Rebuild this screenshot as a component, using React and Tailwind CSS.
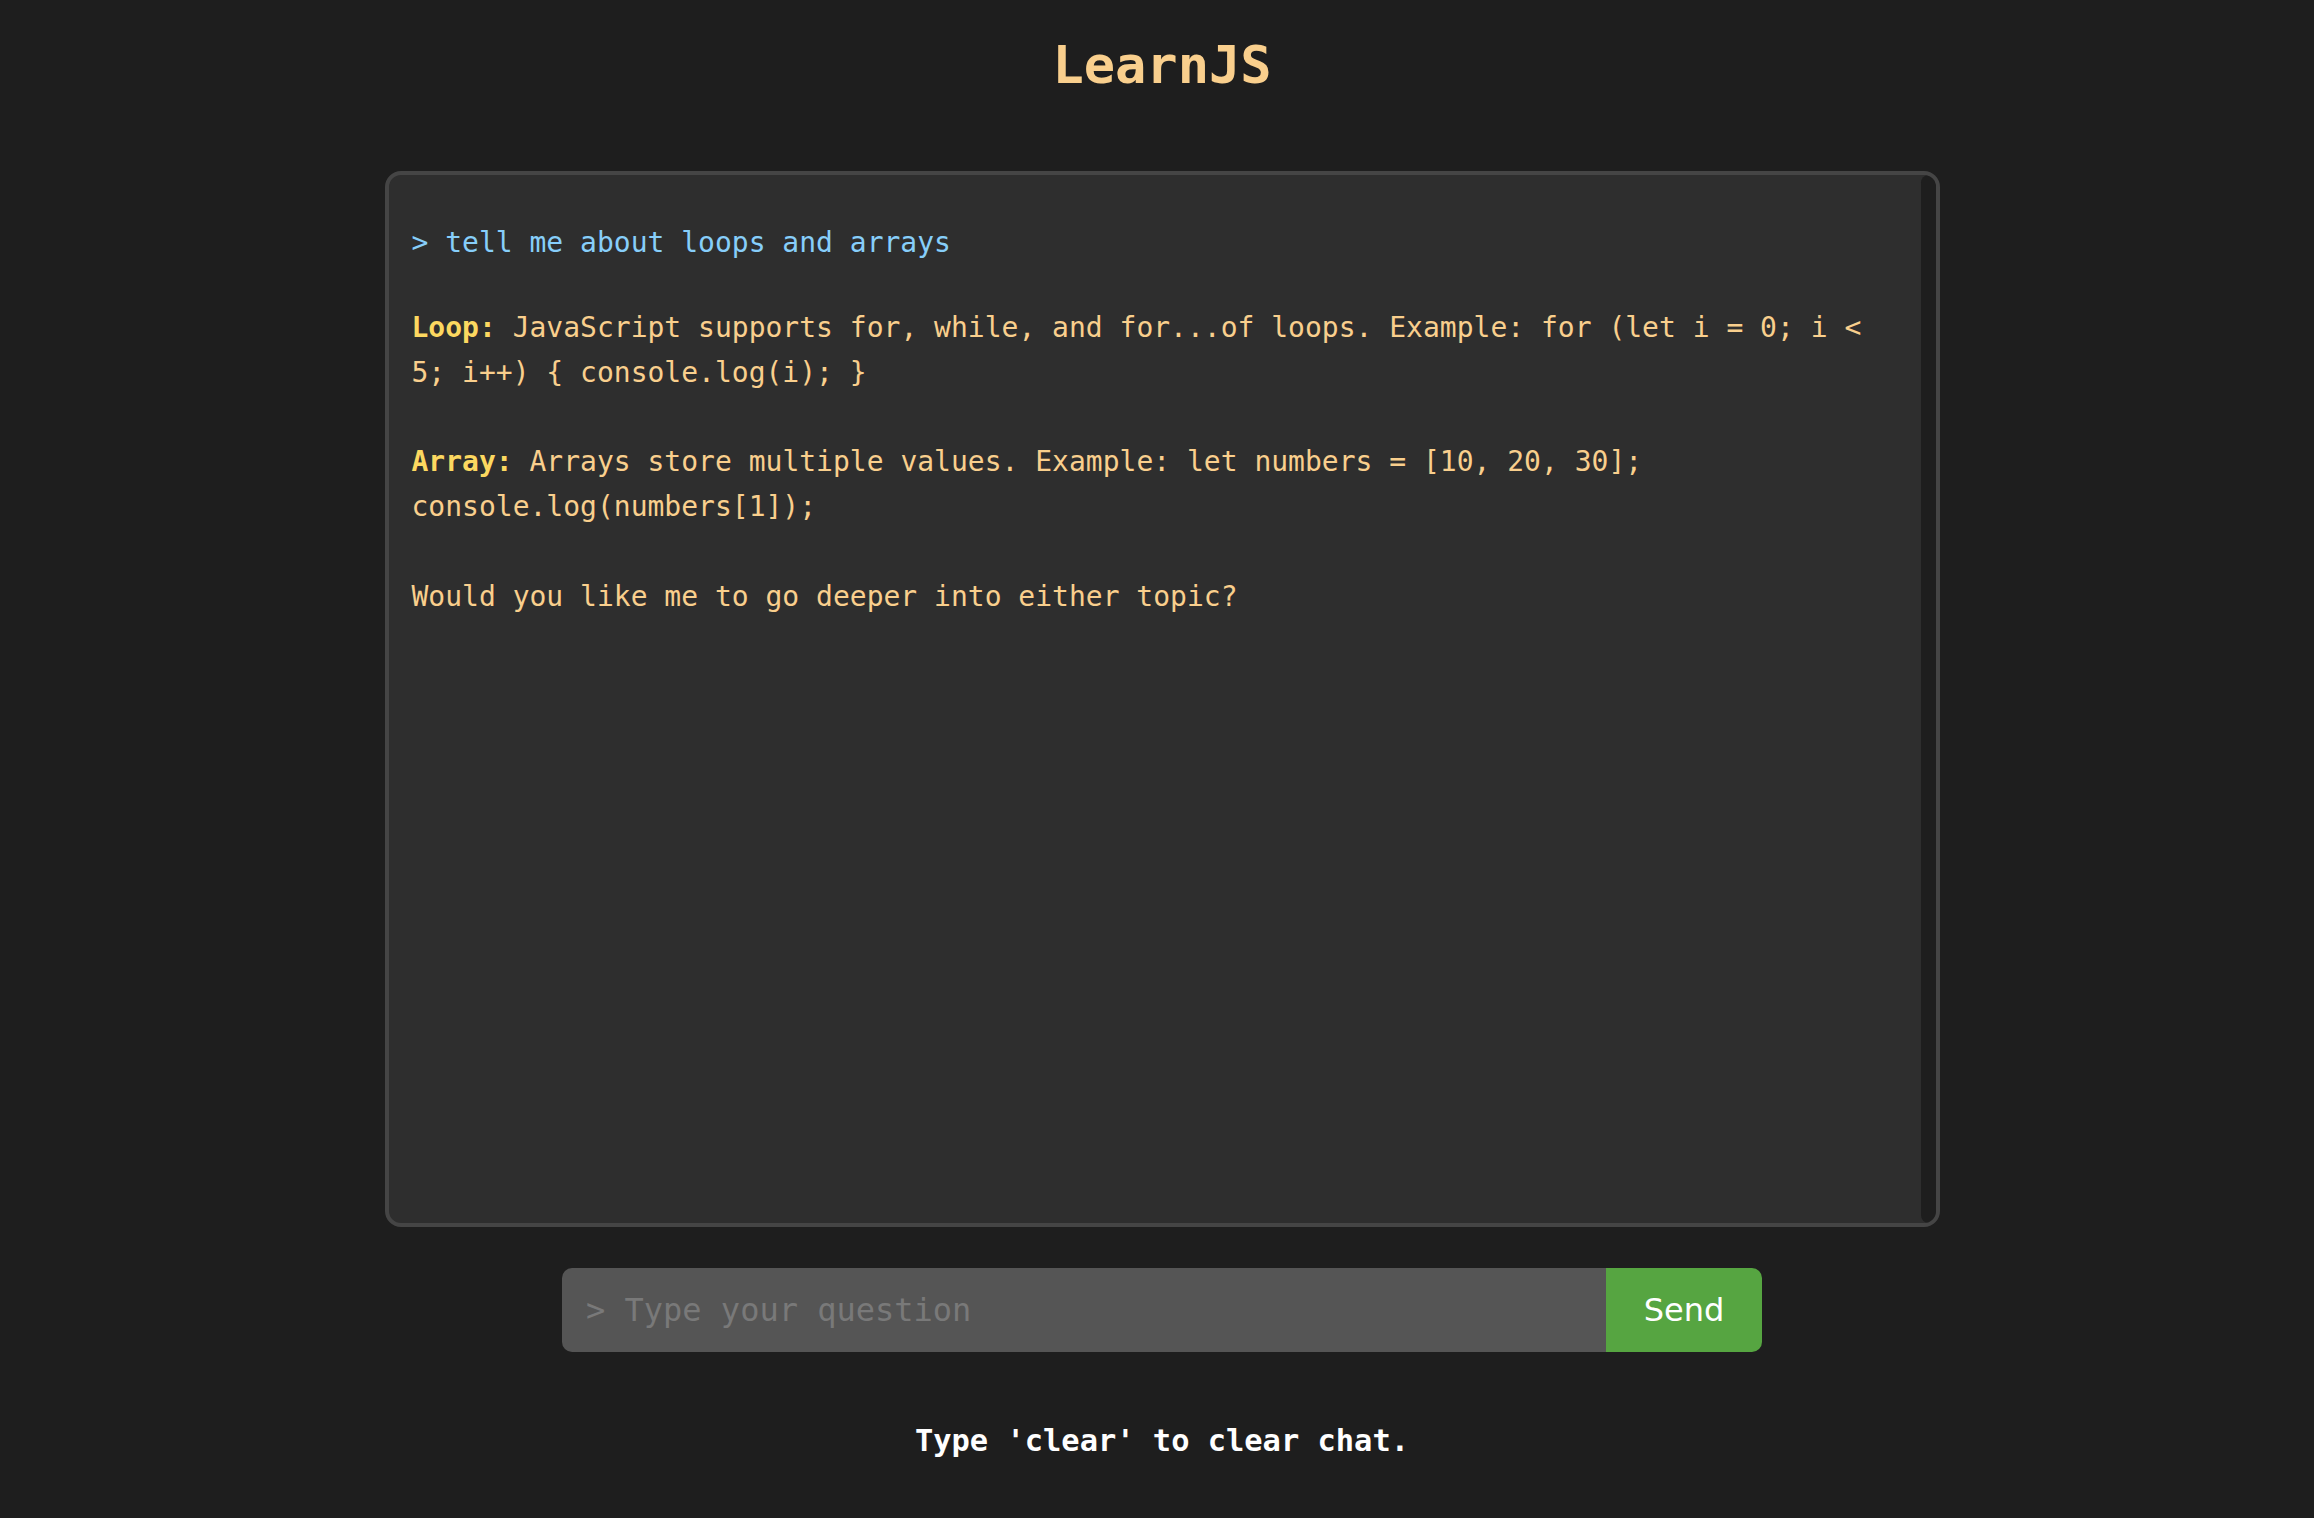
import React from "react";

export default function App() {
  const mono = "font-['DejaVu_Sans_Mono',monospace]";
  return (
    <div className={`min-h-screen w-full bg-[#1e1e1e] flex flex-col items-center pl-[10px] ${mono}`}>
      <h1 className="pt-[35px] text-[52px] leading-[60px] font-bold text-[#f9cf8d]">LearnJS</h1>

      <div className="mt-[76px] w-[1555px] h-[1056px] border-4 border-[#454545] rounded-[16px] bg-[#2e2e2e] flex overflow-hidden">
        <div className="flex-1 pl-[23px] pr-[21px] pt-[46px] text-[28px] leading-[44.8px]">
          <div className="text-[#87cefa] mb-[40px]">&gt; tell me about loops and arrays</div>
          <div className="text-[#f9cf8d] whitespace-pre-wrap">
            <span className="font-bold text-[#fcd860]">Loop:</span>
            {" JavaScript supports for, while, and for...of loops. Example: for (let i = 0; i < 5; i++) { console.log(i); }\n\n"}
            <span className="font-bold text-[#fcd860]">Array:</span>
            {" Arrays store multiple values. Example: let numbers = [10, 20, 30]; console.log(numbers[1]);\n\nWould you like me to go deeper into either topic?"}
          </div>
        </div>
        <div className="w-[15px] bg-[#1e1e1e] rounded-[8px]"></div>
      </div>

      <div className="mt-[41px] w-[1200px] h-[84px] flex">
        <input
          type="text"
          placeholder="> Type your question"
          className={`flex-1 min-w-0 h-full bg-[#555555] rounded-l-[10px] pl-[24px] text-[32px] text-[#dddddd] placeholder:text-[#797979] outline-none ${mono}`}
        />
        <button className="w-[156px] h-full bg-[#56a541] rounded-r-[10px] text-white text-[32px] font-['DejaVu_Sans',sans-serif]">
          Send
        </button>
      </div>

      <p className="mt-[71px] text-[30.4px] leading-[36px] font-bold text-white">Type 'clear' to clear chat.</p>
    </div>
  );
}
